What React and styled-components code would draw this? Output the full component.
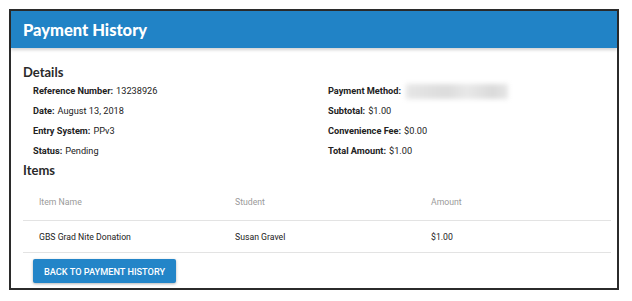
import React from "react";
import styled, { createGlobalStyle } from "styled-components";

const GlobalStyle = createGlobalStyle`
  body {
    margin: 0;
    background: #fff;
    font-family: Roboto, "Liberation Sans", sans-serif;
  }
`;

const Page = styled.div`
  padding: 9px 0 0 9px;
`;

const Card = styled.div`
  width: 606px;
  border: 2px solid #2b2b2b;
  background: #fff;
`;

const Header = styled.div`
  height: 37px;
  background-color: #2183c6;
  color: white;
  display: flex;
  align-items: center;
  padding-left: 12px;
  font-family: Lato, "Open Sans", sans-serif;
  font-size: 16.5px;
  font-weight: 900;
  box-shadow: 0 2px 3px rgba(0, 0, 0, 0.18);
  position: relative;
`;

const Body = styled.div`
  padding: 15px 6px 5px 12px;
`;

const SectionTitle = styled.div`
  font-family: Lato, "Open Sans", sans-serif;
  font-size: 13px;
  font-weight: 700;
  line-height: 18px;
  color: #2a2a2a;
`;

const DetailsGrid = styled.div`
  display: grid;
  grid-template-columns: 295px 1fr;
  grid-auto-flow: column;
  grid-template-rows: repeat(4, 20px);
  padding-left: 10px;
`;

const Field = styled.div`
  font-size: 9.2px;
  line-height: 20px;
  color: #222;
  display: flex;
  align-items: center;
  white-space: nowrap;

  b {
    font-weight: 700;
    margin-right: 3px;
  }
`;

const Blurred = styled.span`
  display: inline-block;
  width: 102px;
  height: 15px;
  margin-left: 2px;
  background: linear-gradient(90deg, #e6e6e6, #dcdcdc 40%, #e8e8e8 60%, #dadada 85%, #e6e6e6);
  filter: blur(2.5px);
`;

const Table = styled.div`
  display: grid;
  grid-template-columns: repeat(3, 1fr);
  font-size: 8.7px;
`;

const HeadCell = styled.div`
  padding: 17px 0 12px 16px;
  line-height: 12px;
  color: #9a9a9a;
  border-bottom: 1px solid #e3e3e3;
`;

const Cell = styled.div`
  height: 32px;
  display: flex;
  align-items: center;
  padding: 1px 0 0 16px;
  box-sizing: border-box;
  color: #222;
  border-bottom: 1px solid #e3e3e3;
`;

const BackButton = styled.button`
  margin: 6px 0 0 10px;
  height: 24px;
  padding: 0 11px;
  border: none;
  border-radius: 2px;
  background-color: #2385c8;
  color: white;
  font-family: Roboto, "Liberation Sans", sans-serif;
  font-size: 9.2px;
  font-weight: 500;
  text-transform: uppercase;
  box-shadow: 0 1px 3px rgba(0, 0, 0, 0.3);
  cursor: pointer;
`;

const details = [
  ["Reference Number:", "13238926"],
  ["Date:", "August 13, 2018"],
  ["Entry System:", "PPv3"],
  ["Status:", "Pending"],
  ["Payment Method:", null],
  ["Subtotal:", "$1.00"],
  ["Convenience Fee:", "$0.00"],
  ["Total Amount:", "$1.00"],
];

const App = () => {
  return (
    <Page>
      <GlobalStyle />
      <Card>
        <Header>Payment History</Header>
        <Body>
          <SectionTitle>Details</SectionTitle>
          <DetailsGrid>
            {details.map(([label, value]) => (
              <Field key={label}>
                <b>{label}</b>
                {value === null ? <Blurred /> : value}
              </Field>
            ))}
          </DetailsGrid>
          <SectionTitle>Items</SectionTitle>
          <Table>
            <HeadCell>Item Name</HeadCell>
            <HeadCell>Student</HeadCell>
            <HeadCell>Amount</HeadCell>
            <Cell>GBS Grad Nite Donation</Cell>
            <Cell>Susan Gravel</Cell>
            <Cell>$1.00</Cell>
          </Table>
          <BackButton>Back to Payment History</BackButton>
        </Body>
      </Card>
    </Page>
  );
};

export default App;
